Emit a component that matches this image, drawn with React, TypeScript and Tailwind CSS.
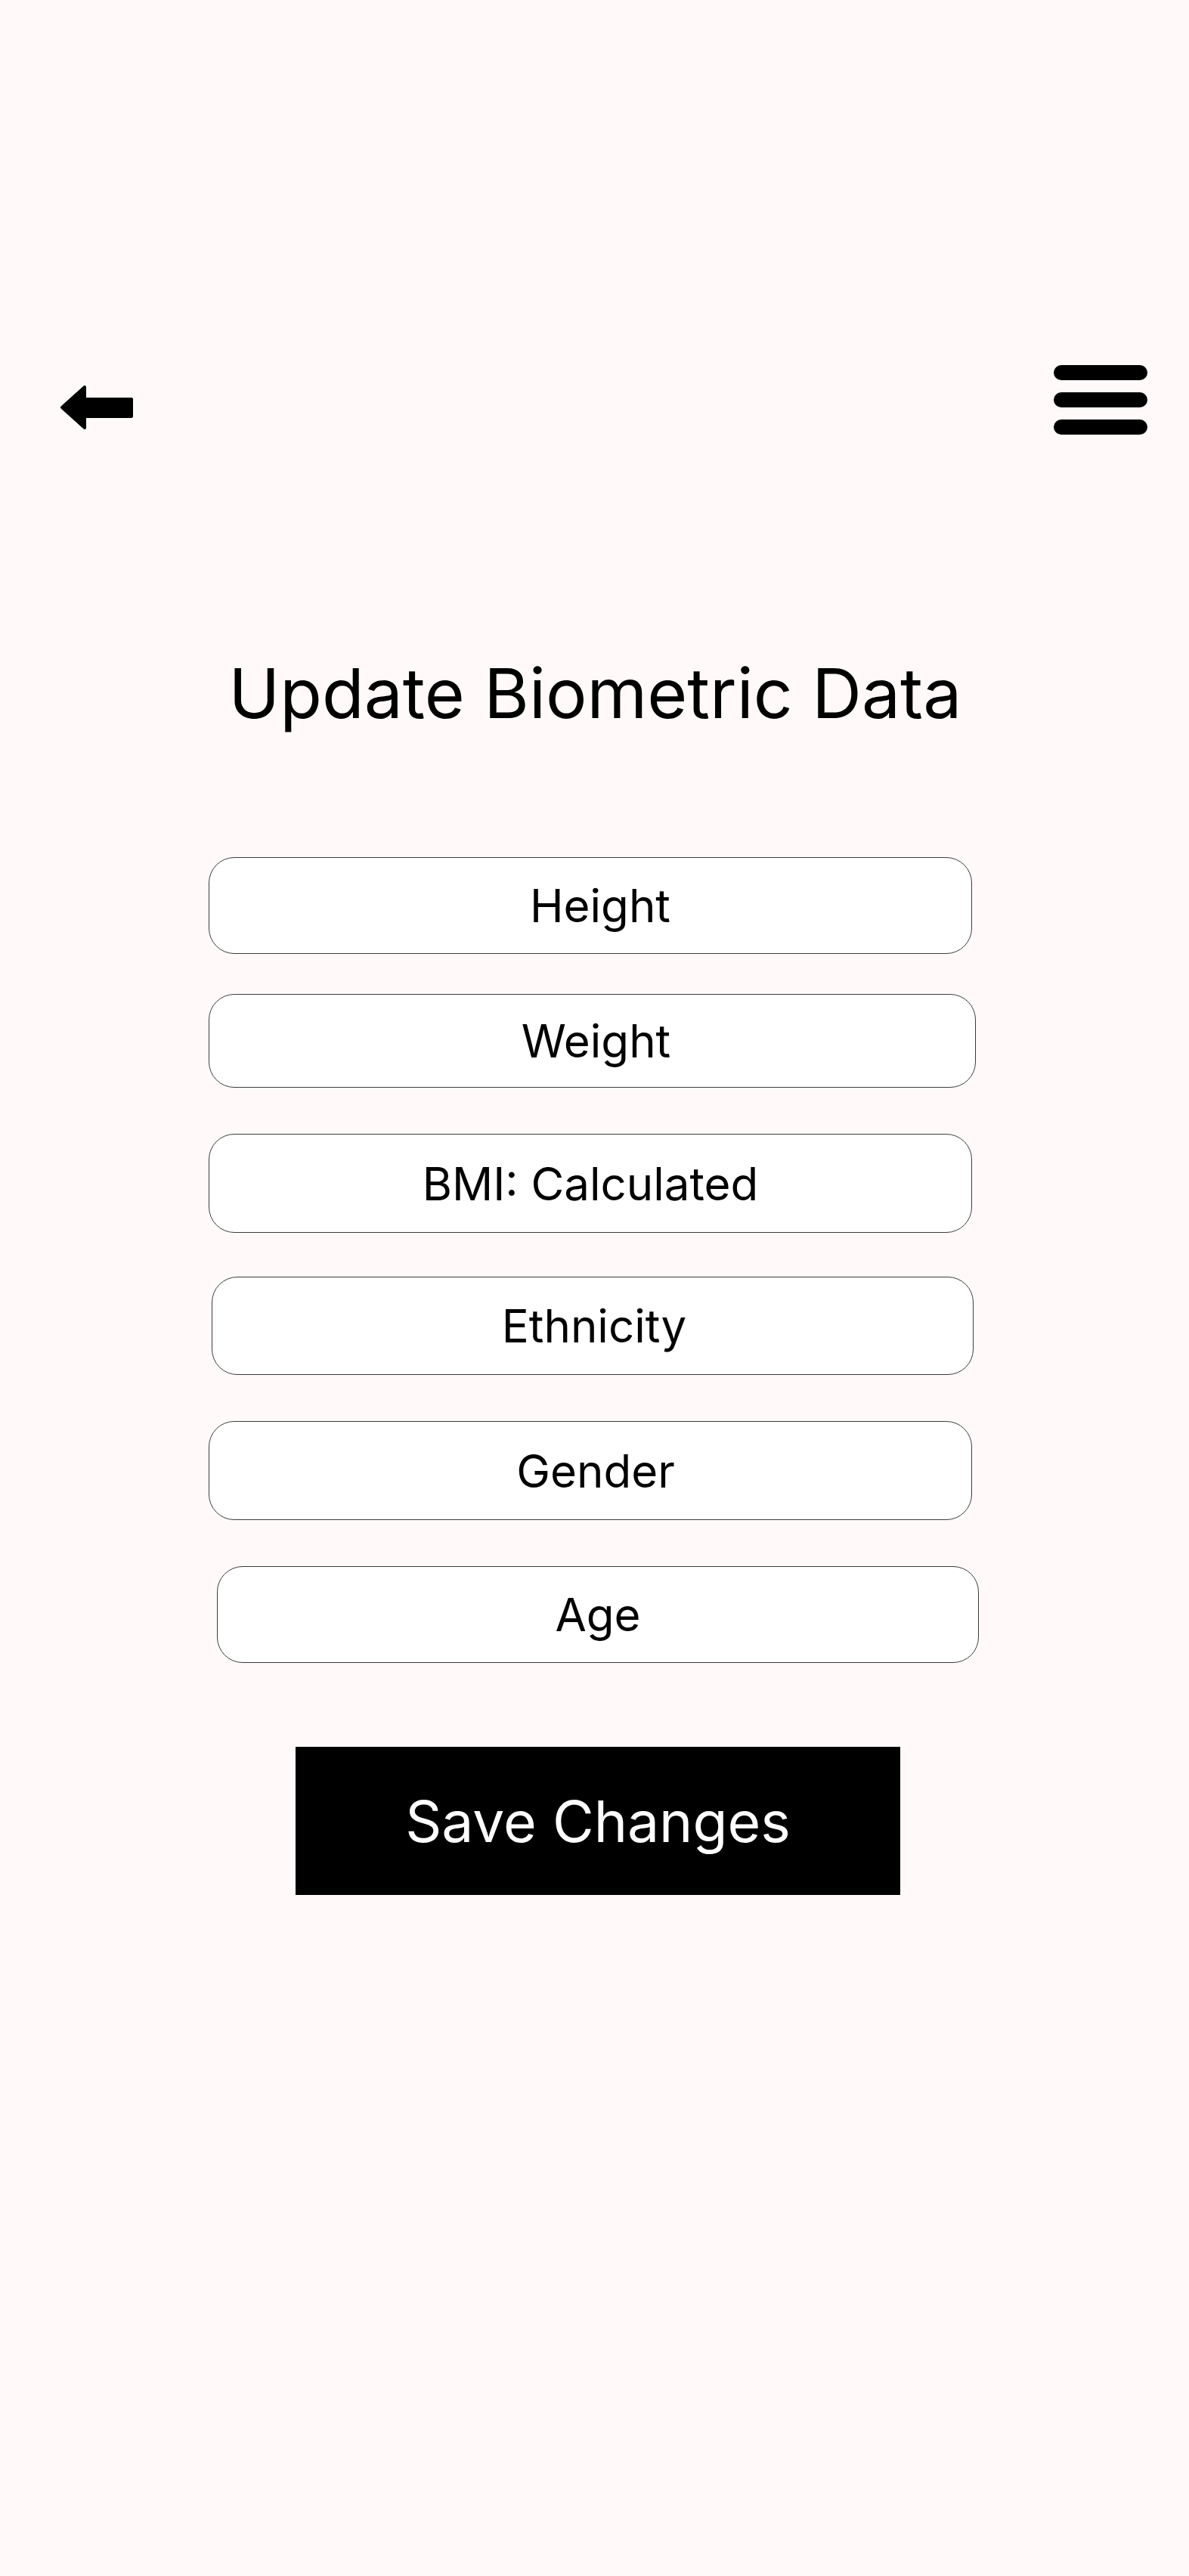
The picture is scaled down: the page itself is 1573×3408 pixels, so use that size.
import React from "react";

// per-row offsets follow the reference's slightly irregular spacing
const fields = [
  { label: "Height", cls: "mt-0 h-[128px] ml-[276px] w-[1010px] pl-[26px]" },
  { label: "Weight", cls: "mt-[53px] h-[124px] ml-[276px] w-[1015px] pl-[10px]" },
  { label: "BMI: Calculated", cls: "mt-[61px] h-[131px] ml-[276px] w-[1010px]" },
  { label: "Ethnicity", cls: "mt-[58px] h-[130px] ml-[280px] w-[1008px] pl-[4px]" },
  { label: "Gender", cls: "mt-[61px] h-[131px] ml-[276px] w-[1010px] pl-[14px]" },
  { label: "Age", cls: "mt-[61px] h-[128px] ml-[287px] w-[1008px]" },
];

function BackArrow() {
  return (
    <svg width="97" height="60" viewBox="0 0 97 60" aria-label="Back">
      <path
        d="M3 30 L33 3 L33 19 L94 19 Q96 19 96 22 L96 39 Q96 42 94 42 L33 42 L33 57 Z"
        fill="#000"
        stroke="#000"
        strokeWidth="4"
        strokeLinejoin="round"
      />
    </svg>
  );
}

function Menu() {
  return (
    <div className="flex flex-col gap-[16px]">
      <span className="block w-[124px] h-[20px] rounded-full bg-black" />
      <span className="block w-[124px] h-[20px] rounded-full bg-black" />
      <span className="block w-[124px] h-[20px] rounded-full bg-black" />
    </div>
  );
}

export default function App() {
  return (
    <div className="min-h-[3408px] w-full bg-[#fffaf9] text-black font-['Inter','Liberation_Sans',sans-serif]">
      <header className="flex items-start justify-between pt-[483px] pl-[79px] pr-[55px]">
        <div className="mt-[26px]">
          <BackArrow />
        </div>
        <Menu />
      </header>

      <h1 className="mt-[297px] text-center text-[91px] leading-none font-normal pl-[2px]">
        Update Biometric Data
      </h1>

      <div className="mt-[171px] flex flex-col">
        {fields.map((f) => (
          <div
            key={f.label}
            className={
              "flex items-center justify-center bg-white border border-[#3d3d3d] rounded-[34px] text-[60px] leading-none " +
              f.cls
            }
          >
            {f.label}
          </div>
        ))}
      </div>

      <button className="mt-[111px] ml-[391px] w-[800px] h-[196px] bg-black text-white text-[75px] leading-none flex items-center justify-center">
        Save Changes
      </button>
    </div>
  );
}
